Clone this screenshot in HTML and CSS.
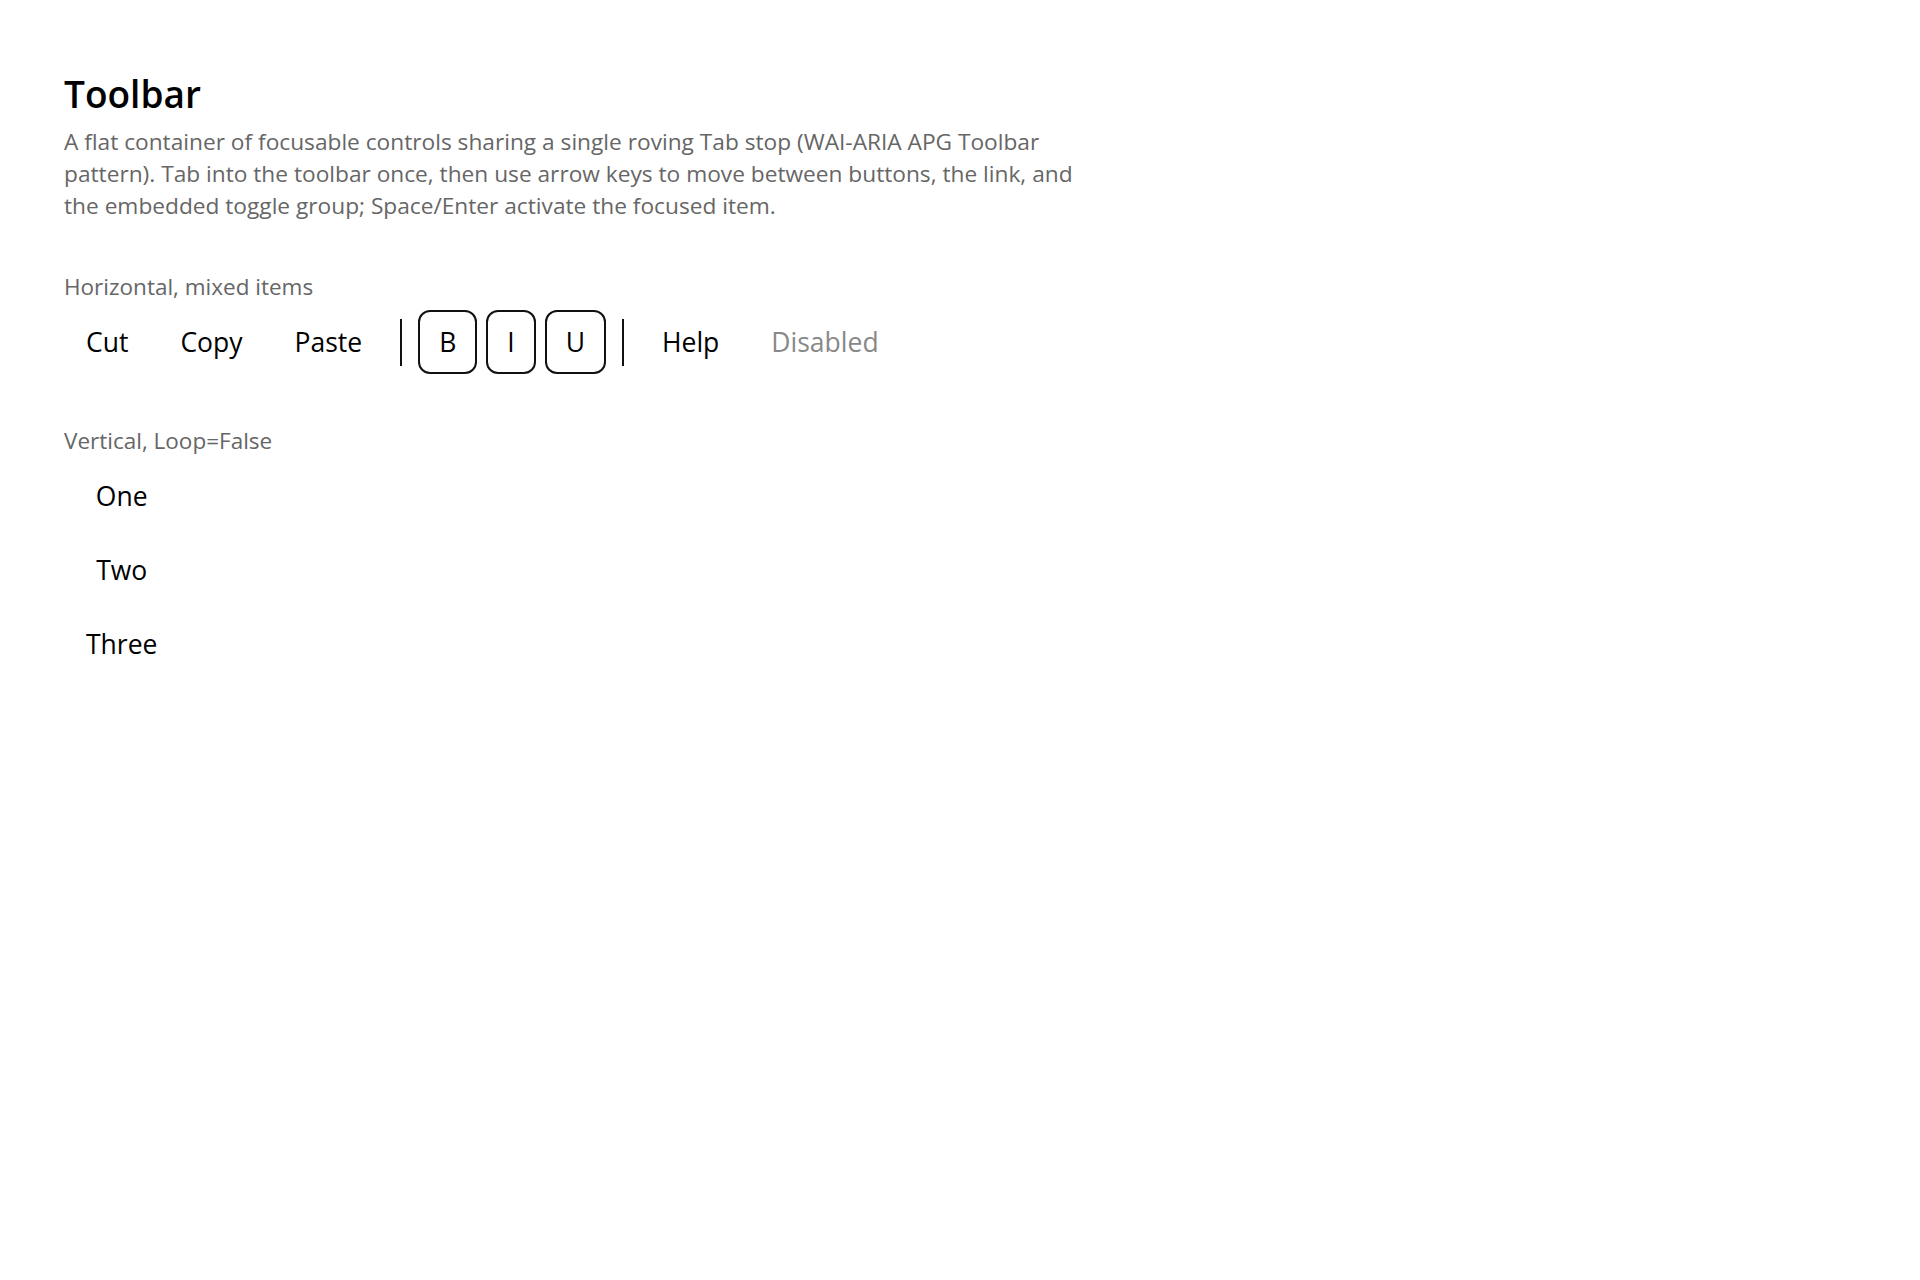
FILE: index.html
```html
<!DOCTYPE html>
<html lang="en">
<head>
  <meta charset="UTF-8" />
  <meta name="viewport" content="width=device-width, initial-scale=1.0"/>
  <title>Toolbar</title>
  <link rel="stylesheet" href="styles.css">
</head>
<body>
  <main class="page">
    <h1>Toolbar</h1>
    <p class="intro">A flat container of focusable controls sharing a single roving Tab stop (WAI-ARIA APG Toolbar pattern). Tab into the toolbar once, then use arrow keys to move between buttons, the link, and the embedded toggle group; Space/Enter activate the focused item.</p>

    <section class="demo">
      <div class="demo-label">Horizontal, mixed items</div>
      <div class="toolbar" role="toolbar" aria-label="Edit">
        <button class="tb-item" tabindex="0">Cut</button>
        <button class="tb-item" tabindex="-1">Copy</button>
        <button class="tb-item" tabindex="-1">Paste</button>
        <span class="tb-sep" role="separator"></span>
        <div class="toggle-group" role="group" aria-label="Format">
          <button class="tb-item toggle" tabindex="-1" aria-pressed="false">B</button>
          <button class="tb-item toggle" tabindex="-1" aria-pressed="false">I</button>
          <button class="tb-item toggle" tabindex="-1" aria-pressed="false">U</button>
        </div>
        <span class="tb-sep" role="separator"></span>
        <a class="tb-item" href="#" tabindex="-1">Help</a>
        <button class="tb-item" disabled>Disabled</button>
      </div>
    </section>

    <section class="demo">
      <div class="demo-label">Vertical, Loop=False</div>
      <div class="toolbar vertical" role="toolbar" aria-orientation="vertical" aria-label="Numbers">
        <button class="tb-item" tabindex="0">One</button>
        <button class="tb-item" tabindex="-1">Two</button>
        <button class="tb-item" tabindex="-1">Three</button>
      </div>
    </section>
  </main>
</body>
</html>
```

FILE: styles.css
```css
:root {
  --texto: #000000;
  --gris: #666666;
  --apagado: #888888;
}
* { box-sizing: border-box; margin: 0; padding: 0; }
body {
  font-family: 'Open Sans', 'Noto Sans', sans-serif;
  background: #ffffff;
  color: var(--texto);
}
.page {
  padding: 70px 64px;
}
h1 {
  font-size: 37px;
  font-weight: 600;
  line-height: 48px;
  margin-bottom: 8px;
}
.intro {
  max-width: 1030px;
  font-size: 22.7px;
  line-height: 32px;
  color: var(--gris);
}
.demo { margin-top: 51px; }
.demo + .demo { margin-top: 53px; }
.demo-label {
  font-size: 22.5px;
  line-height: 28px;
  color: var(--gris);
  margin-bottom: 9px;
}
.toolbar {
  display: flex;
  align-items: center;
  gap: 8px;
}
.toolbar.vertical {
  display: inline-flex;
  flex-direction: column;
  align-items: stretch;
  gap: 10px;
}
.tb-item {
  display: flex;
  align-items: center;
  justify-content: center;
  height: 64px;
  padding: 0 22px;
  font: inherit;
  font-size: 26.5px;
  color: var(--texto);
  background: none;
  border: none;
  text-decoration: none;
  cursor: pointer;
}
.tb-item:disabled { color: var(--apagado); cursor: default; }
.toggle-group {
  display: flex;
  gap: 9px;
}
.tb-item.toggle {
  padding: 0 19px;
  border: 2px solid #111;
  border-radius: 12px;
}
.tb-sep {
  width: 2px;
  height: 47px;
  margin: 0 8px;
  background: #111;
}
```
